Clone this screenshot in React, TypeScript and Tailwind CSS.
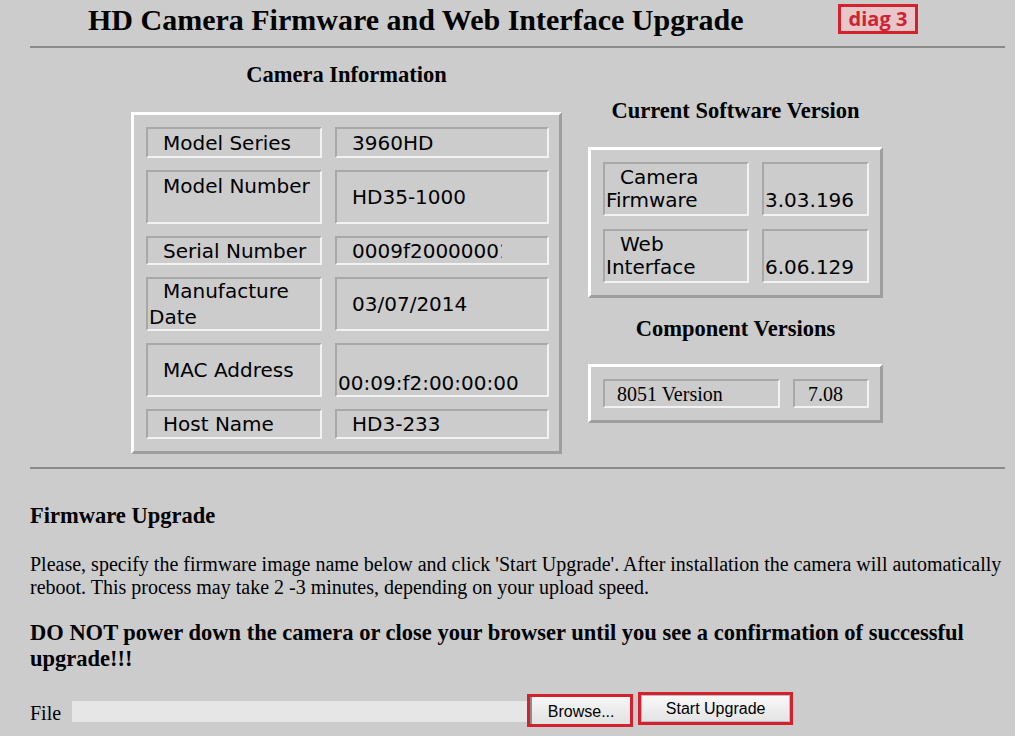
import type { ReactNode } from 'react';

const serif = "font-['Liberation_Serif','Times_New_Roman',serif]";
const sans = "font-['DejaVu_Sans','Verdana',sans-serif]";

// outset frame round each info table, inset frame round each cell
const outer = 'border-[3px] border-t-white border-l-white border-b-[#9e9e9e] border-r-[#9e9e9e]';
const inset = 'border-2 border-t-[#a8a8a8] border-l-[#a8a8a8] border-b-[#f2f2f2] border-r-[#f2f2f2]';

function Cell({ h, className = '', children }: { h: string; className?: string; children: ReactNode }) {
  return <div className={`${inset} ${h} flex flex-col justify-center pl-px ${className}`}>{children}</div>;
}

function Line({ indent = true, children }: { indent?: boolean; children?: ReactNode }) {
  return <div className={`${indent ? 'pl-[14px]' : ''} whitespace-nowrap`}>{children ?? '\u00a0'}</div>;
}

export default function App() {
  return (
    <div className={`min-h-screen bg-[#cccccc] text-black ${serif} pl-[30px] pr-[10px]`}>
      {/* Header */}
      <div className="flex items-start pt-[3px]">
        <div className="w-[808px] pl-[58px]">
          <h1 className="text-[30px] font-bold leading-[34px]">HD Camera Firmware and Web Interface Upgrade</h1>
        </div>
        <div className="mt-px border-[3px] border-[#d3222e] bg-[#e7c7c9] w-[80px] h-[30px] flex items-center justify-center">
          <span className="font-['Open_Sans',sans-serif] text-[20px] font-bold text-[#cf2333] leading-none -mt-px">diag 3</span>
        </div>
      </div>
      <div className="mt-[9px] h-[2px] bg-[#8a8a8a]" />

      {/* Info section */}
      <div className="flex">
        <div className="ml-[101px] w-[431px] flex flex-col items-center">
          <h2 className="mt-[14px] text-[22.5px] font-bold leading-[25px]">Camera Information</h2>
          <div className={`${outer} mt-[25px] w-full p-3 ${sans} text-[20px] leading-[26px]`}>
            <div className="grid grid-cols-[176px_214px] gap-x-[13px] gap-y-3">
              <Cell h="h-[31px]"><Line>Model Series</Line></Cell>
              <Cell h="h-[31px]"><Line>3960HD</Line></Cell>
              <Cell h="h-[54px]" className="!justify-start pt-px"><Line>Model Number</Line></Cell>
              <Cell h="h-[54px]"><Line>HD35-1000</Line></Cell>
              <Cell h="h-[29px]"><Line>Serial Number</Line></Cell>
              <Cell h="h-[29px]">
                <div className="w-[164px] overflow-hidden whitespace-nowrap pl-[14px]">0009f20000001234</div>
              </Cell>
              <Cell h="h-[54px]">
                <Line>Manufacture</Line>
                <Line indent={false}>Date</Line>
              </Cell>
              <Cell h="h-[54px]"><Line>03/07/2014</Line></Cell>
              <Cell h="h-[54px]"><Line>MAC Address</Line></Cell>
              <Cell h="h-[54px]">
                <Line />
                <Line indent={false}>00:09:f2:00:00:00</Line>
              </Cell>
              <Cell h="h-[30px]"><Line>Host Name</Line></Cell>
              <Cell h="h-[30px]"><Line>HD3-233</Line></Cell>
            </div>
          </div>
        </div>

        <div className="ml-[26px] w-[295px] flex flex-col items-center">
          <h2 className="mt-[50px] text-[22.5px] font-bold leading-[25px]">Current Software Version</h2>
          <div className={`${outer} mt-[24px] w-full p-3 ${sans} text-[20px] leading-[23px]`}>
            <div className="grid grid-cols-[146px_107px] gap-x-[13px] gap-y-[13px]">
              <Cell h="h-[54px]">
                <Line>Camera</Line>
                <Line indent={false}>Firmware</Line>
              </Cell>
              <Cell h="h-[54px]">
                <Line />
                <Line indent={false}>3.03.196</Line>
              </Cell>
              <Cell h="h-[54px]">
                <Line>Web</Line>
                <Line indent={false}>Interface</Line>
              </Cell>
              <Cell h="h-[54px]">
                <Line />
                <Line indent={false}>6.06.129</Line>
              </Cell>
            </div>
          </div>

          <h2 className="mt-[18px] text-[22.5px] font-bold leading-[25px]">Component Versions</h2>
          <div className={`${outer} mt-[23px] w-full p-3 text-[20px] leading-[24px]`}>
            <div className="grid grid-cols-[177px_76px] gap-x-[13px]">
              <Cell h="h-[29px]"><div className="pl-[11px]">8051 Version</div></Cell>
              <Cell h="h-[29px]"><div className="pl-[12px]">7.08</div></Cell>
            </div>
          </div>
        </div>
      </div>

      <div className="mt-[13px] h-[2px] bg-[#8a8a8a]" />

      {/* Upgrade section */}
      <h3 className="mt-[34px] text-[22.5px] font-bold leading-[25px]">Firmware Upgrade</h3>
      <p className="mt-[25px] text-[20px] leading-[23px]">
        Please, specify the firmware image name below and click 'Start Upgrade'. After installation the camera will
        automatically reboot. This process may take 2 -3 minutes, depending on your upload speed.
      </p>
      <p className="mt-[21px] text-[22.5px] font-bold leading-[26px]">
        DO NOT power down the camera or close your browser until you see a confirmation of successful upgrade!!!
      </p>

      <div className="mt-[20px] flex items-start">
        <span className="mt-[11px] text-[20px] leading-[20px]">File</span>
        <div className="mt-[9px] ml-[11px] h-[21px] w-[455px] bg-[#e6e6e6]" />
        <div className="mt-[2px] h-[33px] w-[106px] border-[3px] border-[#d3222e] bg-[#f0f0f0] flex items-center">
          <div className="h-full w-full border-l-2 border-[#8c8c8c] bg-gradient-to-b from-[#f6f6f6] to-[#e2e2e2] flex items-center justify-center">
            <span className="font-['Liberation_Sans',Arial,sans-serif] text-[16px] mt-[3px]">Browse...</span>
          </div>
        </div>
        <div className="ml-[5px] h-[33px] w-[155px] border-[3px] border-[#d3222e] bg-[#f4f4f4] flex items-center">
          <div className="h-full w-full border border-[#bdbdbd] bg-gradient-to-b from-[#f8f8f8] to-[#e4e4e4] flex items-center justify-center">
            <span className="font-['Liberation_Sans',Arial,sans-serif] text-[16px]">Start Upgrade</span>
          </div>
        </div>
      </div>
    </div>
  );
}
